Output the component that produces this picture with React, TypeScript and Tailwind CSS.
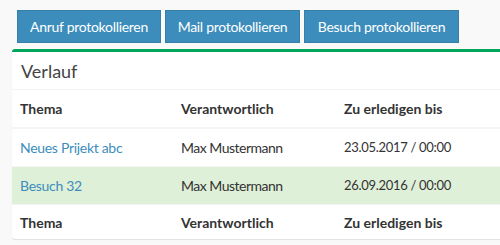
const buttons = [
  { label: "Anruf protokollieren", w: "w-[144px]" },
  { label: "Mail protokollieren", w: "w-[135px]" },
  { label: "Besuch protokollieren", w: "w-[155px]" },
];

const rows = [
  { thema: "Neues Prijekt abc", person: "Max Mustermann", date: "23.05.2017 / 00:00", done: false },
  { thema: "Besuch 32", person: "Max Mustermann", date: "26.09.2016 / 00:00", done: true },
];

function HeadRow({ h }: { h: string }) {
  return (
    <div className={`grid grid-cols-[161px_163px_1fr] ${h} items-center px-2 font-bold text-[14px] text-[#333]`}>
      <span>Thema</span>
      <span>Verantwortlich</span>
      <span>Zu erledigen bis</span>
    </div>
  );
}

export default function App() {
  return (
    <div
      className="w-[500px] h-[245px] overflow-hidden bg-[#f9f9f9] text-[13px]"
      style={{ fontFamily: "Lato, 'Open Sans', sans-serif" }}
    >
      <div className="flex gap-[4px] pl-[17px] pt-[10px]">
        {buttons.map((b) => (
          <button
            key={b.label}
            className={`${b.w} h-[33px] bg-[#3c8dbc] border border-[#367fa9] text-white text-[14px] tracking-[-0.3px] leading-none`}
          >
            {b.label}
          </button>
        ))}
      </div>

      <div className="ml-[12px] mt-[6px] w-[500px] bg-white border-t-[3px] border-[#00a65a] rounded-[3px] shadow-[0_1px_1px_rgba(0,0,0,0.1)]">
        <div className="h-[38px] flex items-center px-[9px] pt-[2px] text-[18px] text-[#444] border-b border-[#f4f4f4]">
          Verlauf
        </div>
        <div className="border-b-2 border-[#f4f4f4]">
          <HeadRow h="h-[37px]" />
        </div>
        {rows.map((r) => (
          <div
            key={r.thema}
            className={`grid grid-cols-[161px_163px_1fr] h-[38px] items-center px-2 border-b border-[#f4f4f4] text-[#333] ${
              r.done ? "bg-[#dff0d8]" : ""
            }`}
          >
            <span className="text-[#3c8dbc] text-[14px] tracking-[-0.3px]">{r.thema}</span>
            <span className="text-[14px] tracking-[-0.5px]">{r.person}</span>
            <span className="tracking-[-0.3px]">{r.date}</span>
          </div>
        ))}
        <HeadRow h="h-[34px]" />
      </div>
    </div>
  );
}
